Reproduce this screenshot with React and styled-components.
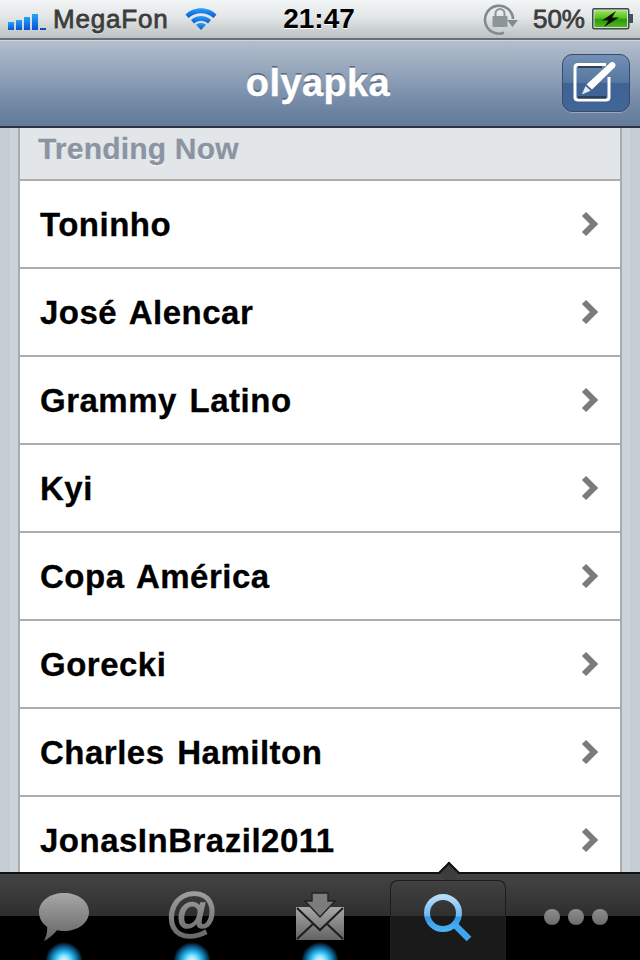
import React from 'react'
import styled, { createGlobalStyle } from 'styled-components';

const trends = ['Toninho', 'José Alencar', 'Grammy Latino', 'Kyi', 'Copa América', 'Gorecki', 'Charles Hamilton', 'JonasInBrazil2011'];

const GlobalStyle = createGlobalStyle`
    html, body {
        margin: 0;
        padding: 0;
        background: #000;
    }
    * {
        box-sizing: border-box;
    }
`;

const Signal = () => (
    <svg width="40" height="24" viewBox="0 0 40 24">
        <defs>
            <linearGradient id="bar" x1="0" y1="0" x2="0" y2="1">
                <stop offset="0" stopColor="#22a6f5" />
                <stop offset="1" stopColor="#0a50d8" />
            </linearGradient>
        </defs>
        <rect x="1" y="15" width="6" height="8" fill="url(#bar)" />
        <rect x="9" y="13" width="6" height="10" fill="url(#bar)" />
        <rect x="17" y="10" width="6" height="13" fill="url(#bar)" />
        <rect x="25" y="7" width="6" height="16" fill="url(#bar)" />
        <rect x="33" y="21" width="6" height="2" fill="#1049c0" />
    </svg>
);

const Wifi = () => (
    <svg width="34" height="26" viewBox="0 0 34 26">
        <defs>
            <linearGradient id="wifi" x1="0" y1="0" x2="0" y2="1">
                <stop offset="0" stopColor="#2aa4f4" />
                <stop offset="1" stopColor="#0a52d8" />
            </linearGradient>
        </defs>
        <path d="M1.5 9.5 C9.5 1 24.5 1 32.5 9.5 L29.5 13 C23 6.6 11 6.6 4.5 13 Z" fill="url(#wifi)" />
        <path d="M7 15 C12.5 9.8 21.5 9.8 27 15 L24 18.4 C20 14.8 14 14.8 10 18.4 Z" fill="url(#wifi)" />
        <path d="M12 19.8 C15 17.4 19 17.4 22 19.8 L17 25 Z" fill="url(#wifi)" />
    </svg>
);

const RotationLock = () => (
    <svg width="36" height="36" viewBox="0 0 36 36">
        <path d="M30 18 A14 14 0 1 0 21 31.8" fill="none" stroke="#7f8b8c" strokeWidth="2.6" />
        <path d="M24 19 H35 L29.5 26 Z" fill="#7f8b8c" />
        <rect x="9.5" y="15" width="15" height="11" rx="1" fill="#8c9696" />
        <path d="M12.5 15 V12.5 A4.5 4.5 0 0 1 21.5 12.5 V15" fill="none" stroke="#8c9696" strokeWidth="2" />
    </svg>
);

const Battery = () => (
    <svg width="42" height="22" viewBox="0 0 42 22">
        <defs>
            <linearGradient id="charge" x1="0" y1="0" x2="0" y2="1">
                <stop offset="0" stopColor="#9ce25c" />
                <stop offset="0.45" stopColor="#55c21e" />
                <stop offset="0.55" stopColor="#2d9a0c" />
                <stop offset="1" stopColor="#4fb81c" />
            </linearGradient>
        </defs>
        <rect x="0.75" y="0.75" width="36" height="20" rx="1.5" fill="#d8dcdc" stroke="#3f4a4c" strokeWidth="1.5" />
        <rect x="2.5" y="2.5" width="32.5" height="16.5" fill="url(#charge)" />
        <rect x="37" y="6" width="4" height="9" fill="#3f5060" />
        <path d="M24 3 L10 12.5 H16.5 L12 19 L27 9.5 H20 Z" fill="#0a0f06" />
    </svg>
);

const ComposeIcon = () => (
    <svg width="46" height="44" viewBox="0 0 46 44">
        <path d="M33 3.5 H5 Q2 3.5 2 6.5 V36 Q2 39 5 39 H33 Q36 39 36 36 V16" fill="none" stroke="#fff" strokeWidth="3" />
        <rect x="5" y="35" width="28" height="2.6" fill="#2f4058" />
        <rect x="5" y="5" width="24" height="2" fill="#2f4058" />
        <path d="M37.5 1.5 Q39.5 0.2 41.6 2 Q43.5 4 42 6 L19 28.5 L13.5 23.5 Z" fill="#fff" />
        <path d="M12.6 25 L17.6 29.8 L8.8 33.6 Z" fill="#e6e9ee" />
    </svg>
);

const Chevron = () => (
    <svg width="18" height="26" viewBox="0 0 18 26">
        <path d="M3 3 L13 13 L3 23" fill="none" stroke="#7b7b7b" strokeWidth="6" strokeLinejoin="miter" />
    </svg>
);

const greyFill = (
    <linearGradient id="grey" x1="0" y1="0" x2="0" y2="1">
        <stop offset="0" stopColor="#a8a8a8" />
        <stop offset="1" stopColor="#636363" />
    </linearGradient>
);

const BubbleIcon = () => (
    <svg width="54" height="52" viewBox="0 0 54 52">
        <defs>{greyFill}</defs>
        <path d="M27 2 C41 2 52 10 52 21 C52 32 41 40 27 40 C24.5 40 22 39.7 20 39.2 C16 44 11 48 7 50 C9 46 10.5 41 10.2 36 C5 32.4 2 27 2 21 C2 10 13 2 27 2 Z" fill="url(#grey)" />
    </svg>
);

const AtIcon = () => (
    <svg width="72" height="72" viewBox="0 0 72 72">
        <defs>
            <linearGradient id="atGrey" gradientUnits="userSpaceOnUse" x1="0" y1="10" x2="0" y2="59">
                <stop offset="0" stopColor="#a0a0a0" />
                <stop offset="1" stopColor="#666" />
            </linearGradient>
        </defs>
        <AtText x="36" y="49" textAnchor="middle" fill="url(#atGrey)" stroke="url(#atGrey)" strokeWidth="1.6">@</AtText>
    </svg>
);

const InboxIcon = () => (
    <svg width="50" height="50" viewBox="0 0 50 50">
        <defs>{greyFill}</defs>
        <path d="M1 15 H49 V48 H1 Z" fill="url(#grey)" />
        <path d="M17 1 H33 V9 H40 L25 25 L10 9 H17 Z" fill="#7c7c7c" stroke="#222" strokeWidth="1.4" />
        <path d="M2 16 L25 38 L48 16 M2 47 L19 31 M48 47 L31 31" fill="none" stroke="#1c1c1c" strokeWidth="2" />
    </svg>
);

const SearchIcon = () => (
    <svg width="56" height="56" viewBox="0 0 56 56">
        <defs>
            <linearGradient id="lens" x1="0" y1="0" x2="0" y2="1">
                <stop offset="0" stopColor="#b5dcf8" />
                <stop offset="0.6" stopColor="#6cb8ef" />
                <stop offset="0.62" stopColor="#2f98ee" />
                <stop offset="1" stopColor="#4ab0f2" />
            </linearGradient>
        </defs>
        <path d="M36 33 L49 46" stroke="#3ea5ee" strokeWidth="6.5" />
        <circle cx="23" cy="20" r="16" fill="none" stroke="url(#lens)" strokeWidth="6" />
    </svg>
);

const App = () => {
    return <Screen>
        <GlobalStyle />
        <StatusBar>
            <StatusLeft>
                <Signal />
                <Carrier>MegaFon</Carrier>
                <WifiSlot><Wifi /></WifiSlot>
            </StatusLeft>
            <Clock>21:47</Clock>
            <StatusRight>
                <RotationLock />
                <Percent>50%</Percent>
                <Battery />
            </StatusRight>
        </StatusBar>
        <NavBar>
            <NavTitle>olyapka</NavTitle>
            <ComposeButton>
                <ComposeIcon />
            </ComposeButton>
        </NavBar>
        <Content>
            <Card>
                <SectionHeader>Trending Now</SectionHeader>
                {trends.map((name) => (
                    <Row key={name}>
                        <RowLabel>{name}</RowLabel>
                        <Chevron />
                    </Row>
                ))}
            </Card>
        </Content>
        <TabBar>
            <Tab $glow><BubbleIcon /></Tab>
            <Tab $glow><AtIcon /></Tab>
            <Tab $glow><InboxIcon /></Tab>
            <Tab $active><SearchIcon /></Tab>
            <Tab>
                <Dots>
                    <Dot />
                    <Dot />
                    <Dot />
                </Dots>
            </Tab>
        </TabBar>
    </Screen>
};

export default App;

const Screen = styled.div`
    width: 640px;
    height: 960px;
    display: flex;
    flex-direction: column;
    overflow: hidden;
    font-family: "Liberation Sans", Arial, sans-serif;
`;

const StatusBar = styled.div`
    height: 40px;
    flex: none;
    display: grid;
    grid-template-columns: 1fr auto 1fr;
    align-items: center;
    padding: 0 6px 0 7px;
    background: linear-gradient(#f3f6f6, #e2e6e6 45%, #bcc1c3);
    border-bottom: 2px solid #6a6f72;
`;

const StatusLeft = styled.div`
    display: flex;
    align-items: center;
`;

const WifiSlot = styled.div`
    display: flex;
    margin-left: 16px;
    margin-top: -2px;
`;

const StatusRight = styled.div`
    display: flex;
    align-items: center;
    justify-content: flex-end;
`;

const Carrier = styled.span`
    font-size: 26px;
    letter-spacing: 0.8px;
    color: #3c3c3c;
    margin-left: 6px;
    -webkit-text-stroke: 0.8px #3c3c3c;
    text-shadow: 0 1px 0 #fff;
`;

const Clock = styled.span`
    font-size: 28px;
    font-weight: bold;
    color: #000;
    margin-right: 3px;
    text-shadow: 0 1px 0 #fff;
`;

const Percent = styled.span`
    font-size: 26px;
    color: #3c3c3c;
    margin: 0 7px 0 14px;
    -webkit-text-stroke: 0.8px #3c3c3c;
    text-shadow: 0 1px 0 #fff;
`;

const NavBar = styled.div`
    height: 88px;
    flex: none;
    position: relative;
    display: flex;
    align-items: center;
    justify-content: center;
    padding-right: 4px;
    background: linear-gradient(#b4bfcd, #6d84a3 80%, #647b9b);
    border-top: 1px solid #cdd5de;
    border-bottom: 2px solid #2c3340;
`;

const NavTitle = styled.h1`
    margin: 0;
    font-size: 38px;
    letter-spacing: 0.4px;
    font-weight: bold;
    color: #fff;
    -webkit-text-stroke: 0.4px #fff;
    text-shadow: 0 -2px 0 #5a6a80;
`;

const ComposeButton = styled.button`
    position: absolute;
    right: 10px;
    top: 13px;
    width: 68px;
    height: 58px;
    padding: 0;
    display: flex;
    align-items: center;
    justify-content: center;
    border-radius: 10px;
    border: 1px solid #3a4c68;
    background: linear-gradient(#7390b6, #55769f 50%, #3f6395 50%, #416597);
    box-shadow: 0 1px 0 rgba(255, 255, 255, 0.3);
`;

const Content = styled.div`
    flex: 1;
    min-height: 0;
    overflow: hidden;
    padding: 0 18px;
    background: repeating-linear-gradient(90deg, #c5cdd5 0, #c5cdd5 10px, #ccd4db 10px, #ccd4db 18px);
`;

const Card = styled.div`
    background: #fff;
    border-left: 2px solid #a9abad;
    border-right: 2px solid #a9abad;
`;

const SectionHeader = styled.div`
    height: 51px;
    padding: 0 0 9px 18px;
    display: flex;
    align-items: center;
    font-size: 30px;
    letter-spacing: 0.2px;
    font-weight: bold;
    color: #8a94a2;
    -webkit-text-stroke: 0.3px #8a94a2;
    text-shadow: 0 1px 0 #fff;
    background: #e2e6e9;
`;

const Row = styled.div`
    height: 88px;
    display: flex;
    align-items: center;
    justify-content: space-between;
    padding: 0 21px 0 20px;
    border-top: 2px solid #adadad;
`;

const RowLabel = styled.span`
    margin-top: 2px;
    font-size: 33px;
    letter-spacing: 0.5px;
    word-spacing: 3px;
    font-weight: bold;
    color: #000;
    -webkit-text-stroke: 0.3px #000;
`;

const TabBar = styled.div`
    height: 88px;
    flex: none;
    position: relative;
    display: grid;
    grid-template-columns: repeat(5, 128px);
    background: linear-gradient(#444 0, #2e2e2e 42px, #000 42px);
    border-top: 2px solid #111;

    &::before {
        content: '';
        position: absolute;
        left: 441px;
        top: -9px;
        width: 14px;
        height: 14px;
        transform: rotate(45deg);
        background: #3c3c3c;
        border-left: 2px solid #111;
        border-top: 2px solid #111;
    }
`;

const Tab = styled.div`
    position: relative;
    display: flex;
    align-items: center;
    justify-content: center;
    overflow: hidden;
    margin: ${(props) => (props.$active ? '6px 6px 0' : '0')};
    border-radius: ${(props) => (props.$active ? '8px 8px 0 0' : '0')};
    border: ${(props) => (props.$active ? '1px solid #1c1c1c' : 'none')};
    border-bottom: none;
    background: ${(props) => (props.$active ? 'linear-gradient(#414141, #303030 35px, #1a1a1a 35px)' : 'none')};

    &::after {
        content: ${(props) => (props.$glow ? "''" : 'none')};
        position: absolute;
        left: 50%;
        bottom: -20px;
        width: 38px;
        height: 38px;
        transform: translateX(-50%);
        border-radius: 50%;
        background: radial-gradient(circle closest-side, #e8faff 0, #8ce4ff 28%, #1aa6dc 55%, #0a4a70 80%, transparent 100%);
    }
`;

const AtText = styled.text`
    font-family: "Liberation Sans", Arial, sans-serif;
    font-size: 52px;
`;

const Dots = styled.div`
    display: flex;
    gap: 8px;
`;

const Dot = styled.span`
    width: 16px;
    height: 16px;
    border-radius: 50%;
    background: linear-gradient(#8e8e8e, #6c6c6c);
`;
